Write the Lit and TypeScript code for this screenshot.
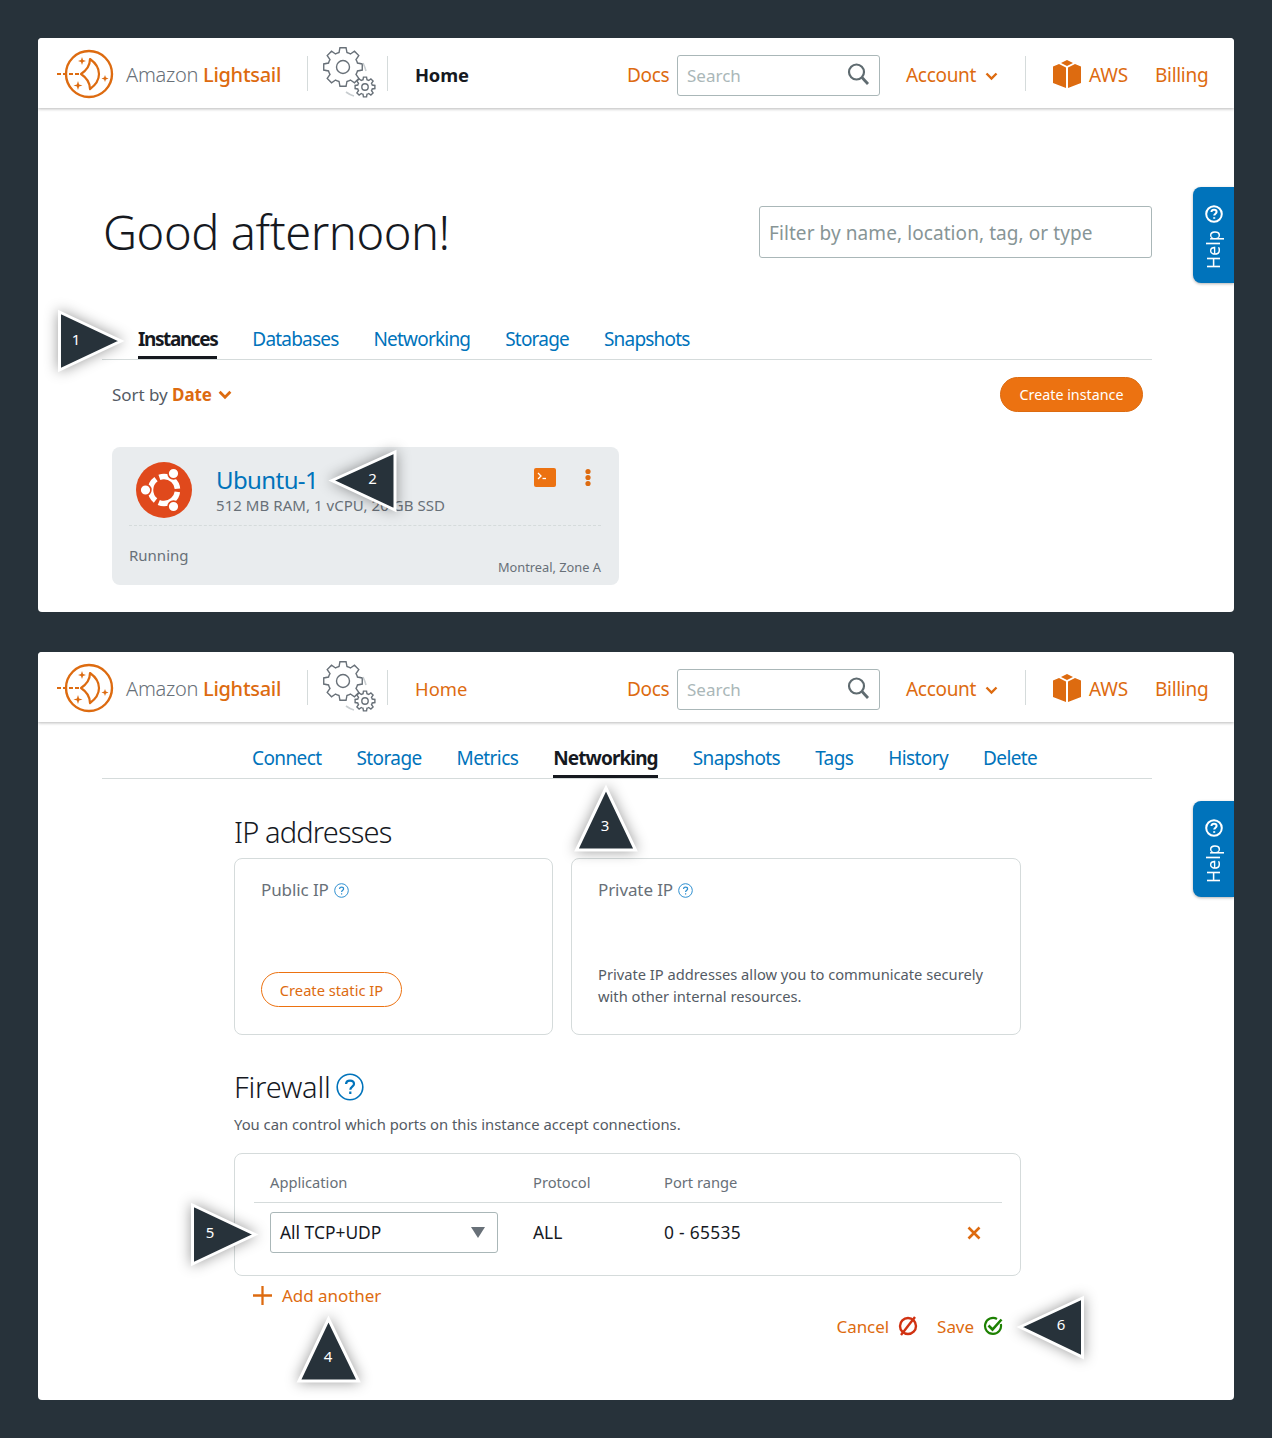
import { LitElement, html, css, svg } from "lit";
import { customElement, property } from "lit/decorators.js";

const FONT = css`"Noto Sans", "Open Sans", sans-serif`;

function gear(cx: number, cy: number, ro: number, ri: number, n: number) {
  const pts: string[] = [];
  for (let i = 0; i < n; i++) {
    const a = (i / n) * Math.PI * 2 - Math.PI / 2;
    const s = (Math.PI * 2) / n;
    const p = (r: number, t: number) =>
      `${(cx + r * Math.cos(a + t * s)).toFixed(2)} ${(cy + r * Math.sin(a + t * s)).toFixed(2)}`;
    pts.push(`${i ? "L" : "M"}${p(ri, -0.34)}`, `L${p(ro, -0.2)}`, `L${p(ro, 0.2)}`, `L${p(ri, 0.34)}`);
    pts.push(`A${ri} ${ri} 0 0 1 ${p(ri, 0.66)}`);
  }
  return pts.join(" ") + "Z";
}

@customElement("top-nav")
class TopNav extends LitElement {
  @property({ type: Boolean }) activeHome = false;
  static styles = css`
    :host { display: flex; align-items: center; height: 70px; box-sizing: border-box; padding-top: 4px; background: #fff; position: relative;
      box-shadow: 0 1px 3px rgba(0,0,0,.28); font-family: ${FONT}; color: #dd6b10; font-size: 19px; }
    .logo { margin: -2px 0 0 18px; width: 60px; height: 52px; flex: none; }
    .brand { margin: -2px 0 0 10px; width: 181px; font-size: 20px; font-weight: 300; letter-spacing: -0.28px; white-space: nowrap; color: #687078; }
    .brand b { font-weight: 500; color: #dd6b10; }
    .sep { width: 1px; height: 35px; background: #d5dbdb; flex: none; margin-top: -4px; }
    .gears { width: 56px; height: 56px; margin: -2px 10px 0 13px; flex: none; }
    .home { margin: -2px 0 0 27px; width: 212px; font-size: 18.4px; }
    .home.on { font-weight: 700; color: #16191f; letter-spacing: -0.2px; }
    .docs { width: 50px; letter-spacing: -0.3px; }
    .search { width: 203px; height: 41px; box-sizing: border-box; border: 1px solid #aab7b8; border-radius: 3px;
      display: flex; align-items: center; justify-content: space-between; padding: 0 9px; color: #aab7b8; font-size: 17px; margin-top: 1px; }
    .search svg { width: 24px; height: 24px; margin-top: -4px; }
    .account { margin-left: 26px; width: 79px; letter-spacing: -0.3px; white-space: nowrap; }
    .chev { width: 13px; height: 9px; flex: none; margin-right: 27px; margin-top: 3px; }
    .cube { width: 28px; height: 28px; margin: -2px 8px 0 27px; flex: none; }
    .aws { width: 66px; letter-spacing: -0.2px; }
    .billing { letter-spacing: -0.3px; }
  `;
  render() {
    return html`
      <svg class="logo" viewBox="0 0 60 52" fill="none" stroke="#dd6b10">
        <circle cx="33" cy="26" r="23" stroke-width="2.4" />
        <path d="M1 26H25" stroke-width="2" stroke-dasharray="4 2" />
        <path d="M25 26C31 22 34 17 34 11C41 16 43 21 43 26C43 31 41 36 34 41C34 35 31 30 25 26Z" stroke-width="2.2" stroke-linejoin="round"/>
        <path fill="#dd6b10" stroke="none" d="M26 9l1 3 3 1-3 1-1 3-1-3-3-1 3-1zM49 27l.9 2.6 2.6.9-2.6.9-.9 2.6-.9-2.6-2.6-.9 2.6-.9zM22 33l1.1 3.4 3.4 1.1-3.4 1.1-1.1 3.4-1.1-3.4-3.4-1.1 3.4-1.1z"/>
      </svg>
      <div class="brand">Amazon <b>Lightsail</b></div>
      <div class="sep"></div>
      <svg class="gears" viewBox="0 0 56 56" fill="none" stroke="#687078" stroke-width="1.4">
        <path d="${gear(22, 21, 19.5, 15, 8)}" />
        <circle cx="22" cy="21" r="6.5" />
        <path d="${gear(44, 41, 10, 7.5, 8)}" />
        <circle cx="44" cy="41" r="3.2" />
        <path d="M25 46Q29 49 33 50M42 17Q44 21 45 25" stroke="#c8cdd0" stroke-width="1.6"/>
      </svg>
      <div class="sep"></div>
      <div class="home ${this.activeHome ? "on" : ""}">Home</div>
      <div class="docs">Docs</div>
      <div class="search">Search
        <svg viewBox="0 0 24 24" fill="none" stroke="#5f6b70" stroke-width="2.2"><circle cx="10.5" cy="10" r="7.5"/><path d="M16 15.5L22 22" stroke-width="2.8"/></svg>
      </div>
      <div class="account">Account</div>
      <svg class="chev" viewBox="0 0 13 9" fill="none" stroke="#dd6b10" stroke-width="2.4"><path d="M1.5 1.5L6.5 6.5L11.5 1.5"/></svg>
      <div class="sep"></div>
      <svg class="cube" viewBox="0 0 28 28" fill="#dd6b10">
        <path d="M14 0L20 3L14 6L8 3Z"/>
        <path d="M0 6.5L6 4L13 7.5V28L0 23ZM28 6.5L22 4L15 7.5V28L28 23Z"/>
      </svg>
      <div class="aws">AWS</div>
      <div class="billing">Billing</div>
    `;
  }
}

@customElement("help-tab")
class HelpTab extends LitElement {
  static styles = css`
    :host { position: absolute; right: 0; top: 149px; width: 41px; height: 96px; background: #0073bb; color: #fff;
      border-radius: 8px 0 0 8px; box-shadow: 0 1px 3px rgba(0,0,0,.3); font-family: ${FONT};
      display: flex; flex-direction: column; align-items: center; padding-top: 18px; box-sizing: border-box; gap: 7px; }
    svg { width: 18px; height: 18px; flex: none; }
    span { writing-mode: vertical-rl; transform: rotate(180deg); font-size: 17.5px; line-height: 20px; letter-spacing: .2px; margin-right: 2px; }
  `;
  render() {
    return html`<svg viewBox="0 0 18 18" fill="none" stroke="#fff" stroke-width="2"><circle cx="9" cy="9" r="7.8"/><path d="M6.4 7C6.6 5.4 7.8 4.8 9 4.8C10.4 4.8 11.6 5.7 11.6 7C11.6 8.6 9.2 8.8 9.2 10.6" /><path d="M9.2 12.2V13.8"/></svg><span>Help</span>`;
  }
}

const MARKERS = [
  { n: "1", pts: "59.5,312 59.5,370 121,341", x: 76, y: 345 },
  { n: "2", pts: "332,480.5 395,452 395,510", x: 372.5, y: 484 },
  { n: "3", pts: "606,788 576.5,850 635.5,850", x: 605, y: 831 },
  { n: "4", pts: "328.5,1319 299,1381 358.5,1381", x: 328, y: 1362 },
  { n: "5", pts: "192.5,1205 192.5,1264 255,1234.5", x: 210, y: 1238 },
  { n: "6", pts: "1020,1327 1082.5,1298 1082.5,1357", x: 1061, y: 1330 },
];

@customElement("app-root")
class AppRoot extends LitElement {
  static styles = css`
    :host { display: block; position: relative; background: #27323a; padding: 38px 38px; box-sizing: border-box; height: 1438px;
      font-family: ${FONT}; color: #16191f; overflow: hidden; }
    .card { background: #fff; border-radius: 4px; position: relative; overflow: hidden; }
    .card + .card { margin-top: 40px; }
    .home-main { padding: 98px 82px 27px 64px; }
    .title-row { display: flex; justify-content: space-between; height: 52px; align-items: center; }
    h1 { margin: 0 0 0 1px; font-size: 47px; font-weight: 300; letter-spacing: -0.42px; line-height: 52px; color: #16191f; }
    .filter { width: 393px; height: 52px; box-sizing: border-box; border: 1px solid #aab7b8; border-radius: 3px; padding: 2px 9px 0;
      display: flex; align-items: center; color: #879596; font-size: 19px; letter-spacing: 0.08px; }
    .tabs { display: flex; gap: 35px; border-bottom: 1px solid #d5dbdb; font-size: 19px; }
    .tabs.t1 { margin-top: 62px; height: 39px; padding-left: 36px; letter-spacing: -0.8px; }
    .tabs.t2 { height: 56px; padding-left: 150px; margin: 0 82px 0 64px; align-items: flex-end; letter-spacing: -0.6px; }
    .tab { color: #0073bb; height: 39px; box-sizing: border-box; line-height: 38px; white-space: nowrap; }
    .tab.on { color: #16191f; font-weight: 700; border-bottom: 3px solid #16191f; }
    .t1 .tab.on { letter-spacing: -1.4px; }
    .t2 .tab.on { letter-spacing: -0.9px; }
    .sort-row { display: flex; justify-content: space-between; align-items: center; margin: 17px 9px 0 10px; height: 35px; }
    .sort { color: #545b64; font-size: 17px; display: flex; align-items: center; gap: 5px; letter-spacing: -0.05px; }
    .sort b { color: #dd6b10; font-weight: 700; }
    .sort svg { width: 14px; height: 10px; margin-left: 1px; }
    .primary { width: 143px; height: 35px; border-radius: 18px; background: #ec7211; color: #fff; font-size: 14.3px;
      border: 1px solid #dd6b10; box-sizing: border-box; display: flex; align-items: center; justify-content: center; }
    .instance { margin: 35px 0 0 10px; width: 507px; height: 138px; background: #e9ecee; border-radius: 8px; box-sizing: border-box; padding: 14px 18px 0 17px; }
    .inst-top { display: flex; height: 64px; border-bottom: 1px dashed #d5dbdb; }
    .ubuntu { width: 56px; height: 56px; margin: 1px 24px 0 7px; flex: none; }
    .inst-info { flex: 1; }
    .inst-name { color: #0073bb; font-size: 24px; line-height: 36px; margin-top: 1px; letter-spacing: -0.6px; }
    .inst-spec { color: #687078; font-size: 15px; line-height: 20px; letter-spacing: 0.05px; margin-top: -3px; }
    .inst-actions { display: flex; gap: 29px; align-items: flex-start; margin-top: 7px; }
    .term { width: 22px; height: 19px; }
    .kebab { width: 6px; height: 19px; margin-right: 10px; }
    .inst-foot { display: flex; justify-content: space-between; margin-top: 19px; color: #687078; font-size: 15px; line-height: 20px; }
    .inst-foot span:last-child { font-size: 12.8px; margin-top: 12px; }
    .net { margin: 0 213px 0 196px; width: 787px; padding-bottom: 63px; }
    h2 { margin: 0; font-size: 29px; font-weight: 300; line-height: 40px; letter-spacing: -0.85px; color: #16191f; }
    .ip-title { margin-top: 33px; }
    .ip-grid { display: grid; grid-template-columns: 319px 450px; gap: 18px; margin-top: 6px; }
    .box { height: 177px; border: 1px solid #d5dbdb; border-radius: 8px; box-sizing: border-box; padding: 21px 26px 0;
      display: flex; flex-direction: column; }
    .lbl { color: #687078; font-size: 17px; line-height: 20px; display: flex; align-items: center; gap: 5px; letter-spacing: -0.1px; }
    .q { width: 15px; height: 15px; flex: none; }
    .ghost { margin: auto 0 27px 0; width: 141px; height: 35px; border: 1px solid #ec7211; border-radius: 18px; box-sizing: border-box;
      color: #dd6b10; font-size: 14.7px; display: flex; align-items: center; justify-content: center; }
    .box p { margin: auto 0 27px; color: #545b64; font-size: 14.7px; line-height: 22px; }
    .fw-title { margin-top: 32px; display: flex; align-items: center; gap: 5px; letter-spacing: -0.2px; }
    .fw-title svg { width: 28px; height: 28px; }
    .fw-desc { margin: 7px 0 0; color: #545b64; font-size: 14.8px; line-height: 20px; }
    .fw-box { margin-top: 19px; height: 123px; border: 1px solid #d5dbdb; border-radius: 8px; box-sizing: border-box; padding: 0 18px 0 19px; }
    .row { display: grid; grid-template-columns: 263px 131px 1fr; padding-left: 16px; align-items: center; }
    .head { height: 49px; border-bottom: 1px solid #d5dbdb; color: #687078; font-size: 14.7px; padding-top: 8px; box-sizing: border-box; }
    .data { height: 58px; font-size: 17.4px; color: #16191f; position: relative; }
    .port { letter-spacing: .3px; }
    .select { width: 228px; height: 41px; border: 1px solid #aab7b8; border-radius: 3px; box-sizing: border-box; display: flex; align-items: center;
      justify-content: space-between; padding: 0 12px 0 9px; background: #fff; }
    .select i { width: 0; height: 0; border-left: 7px solid transparent; border-right: 7px solid transparent; border-top: 11px solid #687078; }
    .x { position: absolute; right: 21px; top: 23px; width: 14px; height: 14px; }
    .add { display: flex; align-items: center; gap: 10px; margin: 8px 0 0 19px; height: 22px; color: #dd6b10; font-size: 17px; letter-spacing: -0.05px; }
    .add svg { width: 19px; height: 19px; }
    .actions { display: flex; justify-content: flex-end; align-items: center; margin: 9px 18px 0 0; height: 22px; color: #dd6b10; font-size: 17px; letter-spacing: -0.05px; }
    .actions svg { width: 20px; height: 20px; margin-left: 9px; }
    .actions svg.c { margin-right: 19px; }
    .overlay { position: absolute; left: 0; top: 0; width: 1272px; height: 1438px; pointer-events: none; }
    .overlay polygon { fill: #27323a; stroke: #fff; stroke-width: 3; filter: drop-shadow(0 0 7px rgba(0,0,0,.4)); }
    .overlay text { fill: #fff; font-size: 15px; text-anchor: middle; font-family: ${FONT}; }
  `;
  q(cls = "q") {
    return html`<svg class="${cls}" viewBox="0 0 15 15" fill="none" stroke="#2e8fd0"><circle cx="7.5" cy="7.5" r="6.8" stroke-width="1"/><path d="M5.5 6C5.6 4.7 6.5 4.1 7.5 4.1C8.6 4.1 9.6 4.8 9.6 5.9C9.6 7.2 7.6 7.3 7.6 8.9M7.6 10.2V11.5" stroke-width="1.2"/></svg>`;
  }
  render() {
    return html`
      <section class="card">
        <top-nav activeHome></top-nav>
        <help-tab></help-tab>
        <div class="home-main">
          <div class="title-row">
            <h1>Good afternoon!</h1>
            <div class="filter">Filter by name, location, tag, or type</div>
          </div>
          <div class="tabs t1">
            <div class="tab on">Instances</div>
            ${["Databases", "Networking", "Storage", "Snapshots"].map((t) => html`<div class="tab">${t}</div>`)}
          </div>
          <div class="sort-row">
            <div class="sort"><span>Sort by <b>Date</b></span>
              <svg viewBox="0 0 13 9" fill="none" stroke="#dd6b10" stroke-width="2.6"><path d="M1.5 1.5L6.5 6.5L11.5 1.5"/></svg>
            </div>
            <div class="primary">Create instance</div>
          </div>
          <div class="instance">
            <div class="inst-top">
              <svg class="ubuntu" viewBox="0 0 56 56">
                <circle cx="28" cy="28" r="28" fill="#e0491c"/>
                <circle cx="28" cy="28" r="13.5" fill="none" stroke="#fff" stroke-width="5.5" stroke-dasharray="24.5 3.8" stroke-dashoffset="-1.9"/>
                <g fill="#fff" stroke="#e0491c" stroke-width="1.6"><circle cx="9.5" cy="28" r="5.4"/><circle cx="37.5" cy="11.5" r="5.4"/><circle cx="37.5" cy="44.5" r="5.4"/></g>
              </svg>
              <div class="inst-info">
                <div class="inst-name">Ubuntu-1</div>
                <div class="inst-spec">512 MB RAM, 1 vCPU, 20 GB SSD</div>
              </div>
              <div class="inst-actions">
                <svg class="term" viewBox="0 0 22 19"><rect width="22" height="19" rx="2" fill="#ec7211"/><path d="M4 5L7 8L4 11" fill="none" stroke="#fff" stroke-width="1.3"/><path d="M8.5 10.5H12" stroke="#fff" stroke-width="1.3"/></svg>
                <svg class="kebab" viewBox="0 0 6 19" fill="#dd6b10"><circle cx="3" cy="3.5" r="2.6"/><circle cx="3" cy="9.5" r="2.6"/><circle cx="3" cy="15.5" r="2.6"/></svg>
              </div>
            </div>
            <div class="inst-foot"><span>Running</span><span>Montreal, Zone A</span></div>
          </div>
        </div>
      </section>
      <section class="card">
        <top-nav></top-nav>
        <help-tab></help-tab>
        <div class="tabs t2">
          ${["Connect", "Storage", "Metrics"].map((t) => html`<div class="tab">${t}</div>`)}
          <div class="tab on">Networking</div>
          ${["Snapshots", "Tags", "History", "Delete"].map((t) => html`<div class="tab">${t}</div>`)}
        </div>
        <div class="net">
          <h2 class="ip-title">IP addresses</h2>
          <div class="ip-grid">
            <div class="box">
              <div class="lbl">Public IP ${this.q()}</div>
              <div class="ghost">Create static IP</div>
            </div>
            <div class="box">
              <div class="lbl">Private IP ${this.q()}</div>
              <p>Private IP addresses allow you to communicate securely<br />with other internal resources.</p>
            </div>
          </div>
          <h2 class="fw-title">Firewall
            <svg viewBox="0 0 28 28" fill="none" stroke="#0073bb"><circle cx="14" cy="14" r="12.8" stroke-width="1.6"/><path d="M10 11C10.2 8.6 12 7.6 14 7.6C16.2 7.6 18 8.9 18 11C18 13.6 14.3 13.8 14.3 16.8M14.3 18.6V21" stroke-width="2.2"/></svg>
          </h2>
          <p class="fw-desc">You can control which ports on this instance accept connections.</p>
          <div class="fw-box">
            <div class="row head"><span>Application</span><span>Protocol</span><span>Port range</span></div>
            <div class="row data">
              <div class="select">All TCP+UDP<i></i></div>
              <span>ALL</span><span class="port">0 - 65535</span>
              <svg class="x" viewBox="0 0 14 14" stroke="#dd6b10" stroke-width="2.6"><path d="M1.5 1.5L12.5 12.5M12.5 1.5L1.5 12.5"/></svg>
            </div>
          </div>
          <div class="add">
            <svg viewBox="0 0 20 20" stroke="#dd6b10" stroke-width="2.4"><path d="M10 0V20M0 10H20"/></svg>
            Add another
          </div>
          <div class="actions">
            Cancel
            <svg class="c" viewBox="0 0 20 20" fill="none" stroke="#d13212" stroke-width="2.4"><circle cx="10" cy="10" r="8"/><path d="M17 1L3 19"/></svg>
            Save
            <svg viewBox="0 0 20 20" fill="none" stroke="#1d8102" stroke-width="2.2"><path d="M17.8 8A8 8 0 1 1 14 3"/><path d="M5.5 9.5L9.5 13.5L18.5 3.5" stroke-width="2.6"/></svg>
          </div>
        </div>
      </section>
      <svg class="overlay" viewBox="0 0 1272 1438">
        ${MARKERS.map((m) => svg`<polygon points="${m.pts}"></polygon><text x="${m.x}" y="${m.y}">${m.n}</text>`)}
      </svg>
    `;
  }
}
